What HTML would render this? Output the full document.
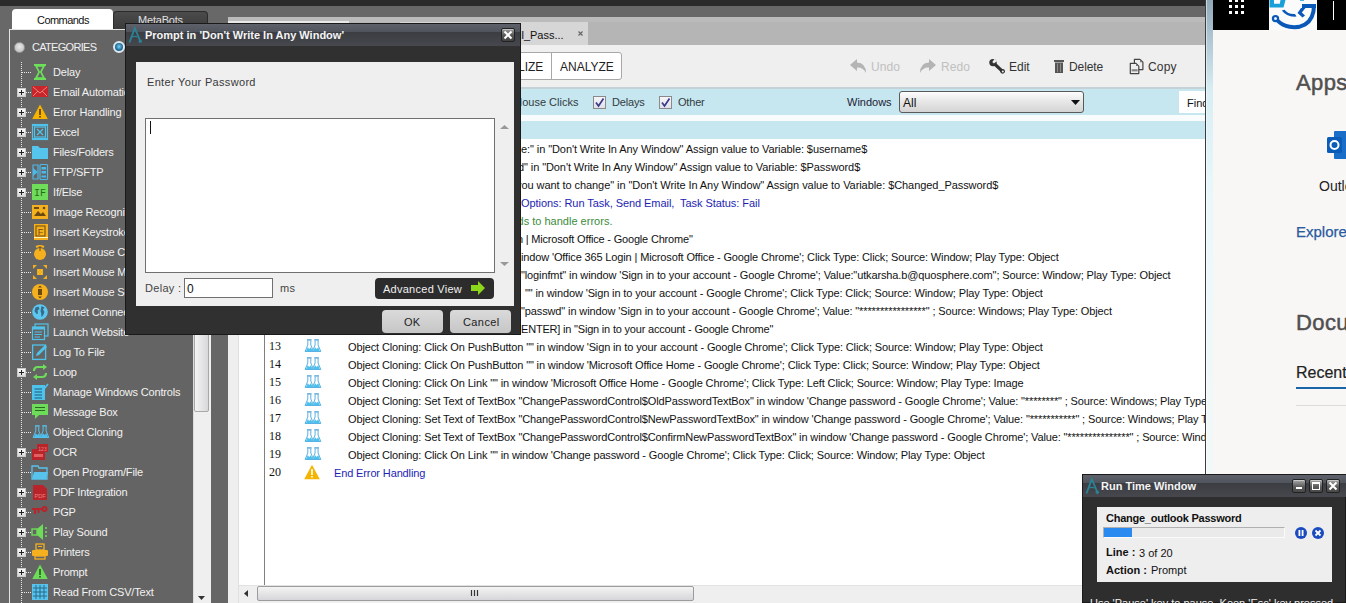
<!DOCTYPE html>
<html><head><meta charset="utf-8">
<style>
*{box-sizing:border-box}
html,body{margin:0;padding:0}
body{width:1346px;height:603px;overflow:hidden;position:relative;background:#686868;font-family:"Liberation Sans",sans-serif;font-size:11px}
.a{position:absolute}
.t{position:absolute;white-space:nowrap;line-height:1}
svg{position:absolute;overflow:visible}
.side{color:#f2f2f2;font-size:11px;letter-spacing:-0.18px}
.code{font-size:11px;letter-spacing:-0.13px;color:#111}
.ln{font-family:"Liberation Serif",serif;font-size:12px;color:#111}
</style></head><body>

<div class="a" style="left:0px;top:0px;width:1346px;height:6px;background:#2b2b2b"></div>
<div class="a" style="left:12px;top:9px;width:101px;height:21px;background:#fff;border-radius:4px 4px 0 0"></div>
<div class="t" style="left:37px;top:15px;font-size:11px;color:#111;letter-spacing:-0.55px">Commands</div>
<div class="a" style="left:113px;top:11px;width:95px;height:19px;background:linear-gradient(#4b4b4b,#3a3a3a);border-radius:4px 4px 0 0;border:1px solid #2c2c2c;border-bottom:none"></div>
<div class="t" style="left:138px;top:15px;font-size:11px;color:#e0e0e0;letter-spacing:-0.2px">MetaBots</div>
<div class="a" style="left:9px;top:29px;width:205px;height:580px;background:#646464;border-left:1px solid #e4e4e4;border-top:1px solid #e4e4e4"></div>
<div class="a" style="left:14px;top:42px;width:11px;height:11px;border-radius:50%;background:radial-gradient(circle at 50% 40%,#e8e8e8,#b8b8b8);border:1px solid #9a9a9a"></div>
<div class="t" style="left:32px;top:42px;font-size:11px;color:#f0f0f0;letter-spacing:-0.7px">CATEGORIES</div>
<div class="a" style="left:113px;top:41px;width:12px;height:12px;border-radius:50%;background:radial-gradient(circle at 50% 45%,#7fd0f0,#1a6a9a 60%);border:2px solid #dfe8ee"></div>
<div class="a" style="left:21px;top:62px;width:1px;height:541px;background:repeating-linear-gradient(#e8e8e8 0 1px,transparent 1px 2px)"></div>
<div class="a" style="left:22px;top:72px;width:9px;height:1px;background:repeating-linear-gradient(90deg,#e8e8e8 0 1px,transparent 1px 2px)"></div>
<svg style="left:32px;top:64px" width="16" height="16" viewBox="0 0 16 16"><rect x="2" y="0" width="12" height="2" fill="#6ee05a"/><rect x="2" y="14" width="12" height="2" fill="#6ee05a"/><path d="M4 2 L12 2 L8.8 8 L12 14 L4 14 L7.2 8 Z" fill="none" stroke="#6ee05a" stroke-width="1.6"/></svg>
<div class="t side" style="left:53px;top:67px;">Delay</div>
<div class="a" style="left:22px;top:92px;width:9px;height:1px;background:repeating-linear-gradient(90deg,#e8e8e8 0 1px,transparent 1px 2px)"></div>
<div class="a" style="left:17px;top:88px;width:9px;height:9px;background:linear-gradient(#fafafa,#d8d8d8);border:1px solid #c8c8c8"></div>
<div class="a" style="left:19px;top:92px;width:5px;height:1px;background:#222"></div>
<div class="a" style="left:21px;top:90px;width:1px;height:5px;background:#222"></div>
<svg style="left:32px;top:84px" width="16" height="16" viewBox="0 0 16 16"><rect x="0" y="2" width="16" height="11" fill="#c8262a"/><path d="M1 3 L8 9 L15 3" stroke="#f08080" stroke-width="1" fill="none"/><path d="M1 12 L6 7 M15 12 L10 7" stroke="#f08080" stroke-width="1"/></svg>
<div class="t side" style="left:53px;top:87px;">Email Automation</div>
<div class="a" style="left:22px;top:112px;width:9px;height:1px;background:repeating-linear-gradient(90deg,#e8e8e8 0 1px,transparent 1px 2px)"></div>
<div class="a" style="left:17px;top:108px;width:9px;height:9px;background:linear-gradient(#fafafa,#d8d8d8);border:1px solid #c8c8c8"></div>
<div class="a" style="left:19px;top:112px;width:5px;height:1px;background:#222"></div>
<div class="a" style="left:21px;top:110px;width:1px;height:5px;background:#222"></div>
<svg style="left:32px;top:104px" width="16" height="16" viewBox="0 0 16 16"><path d="M8 0.5 L15.8 15 L0.2 15 Z" fill="#f5b400"/><rect x="7.2" y="5" width="1.6" height="6" fill="#5a3a00"/><rect x="7.2" y="12" width="1.6" height="1.6" fill="#5a3a00"/></svg>
<div class="t side" style="left:53px;top:107px;">Error Handling</div>
<div class="a" style="left:22px;top:132px;width:9px;height:1px;background:repeating-linear-gradient(90deg,#e8e8e8 0 1px,transparent 1px 2px)"></div>
<div class="a" style="left:17px;top:128px;width:9px;height:9px;background:linear-gradient(#fafafa,#d8d8d8);border:1px solid #c8c8c8"></div>
<div class="a" style="left:19px;top:132px;width:5px;height:1px;background:#222"></div>
<div class="a" style="left:21px;top:130px;width:1px;height:5px;background:#222"></div>
<svg style="left:32px;top:124px" width="16" height="16" viewBox="0 0 16 16"><rect x="0.5" y="0.5" width="15" height="15" fill="none" stroke="#4fc3ec" stroke-width="1.2"/><rect x="2.5" y="3" width="11" height="10" fill="none" stroke="#4fc3ec" stroke-width="1.2"/><path d="M5 5 L11 11 M11 5 L5 11" stroke="#4fc3ec" stroke-width="1.4"/><rect x="0" y="0" width="16" height="2" fill="#4fc3ec"/><rect x="0" y="14" width="16" height="2" fill="#4fc3ec"/></svg>
<div class="t side" style="left:53px;top:127px;">Excel</div>
<div class="a" style="left:22px;top:152px;width:9px;height:1px;background:repeating-linear-gradient(90deg,#e8e8e8 0 1px,transparent 1px 2px)"></div>
<div class="a" style="left:17px;top:148px;width:9px;height:9px;background:linear-gradient(#fafafa,#d8d8d8);border:1px solid #c8c8c8"></div>
<div class="a" style="left:19px;top:152px;width:5px;height:1px;background:#222"></div>
<div class="a" style="left:21px;top:150px;width:1px;height:5px;background:#222"></div>
<svg style="left:32px;top:144px" width="16" height="16" viewBox="0 0 16 16"><path d="M0 2 L6 2 L8 4 L16 4 L16 15 L0 15 Z" fill="#55c5ee"/></svg>
<div class="t side" style="left:53px;top:147px;">Files/Folders</div>
<div class="a" style="left:22px;top:172px;width:9px;height:1px;background:repeating-linear-gradient(90deg,#e8e8e8 0 1px,transparent 1px 2px)"></div>
<div class="a" style="left:17px;top:168px;width:9px;height:9px;background:linear-gradient(#fafafa,#d8d8d8);border:1px solid #c8c8c8"></div>
<div class="a" style="left:19px;top:172px;width:5px;height:1px;background:#222"></div>
<div class="a" style="left:21px;top:170px;width:1px;height:5px;background:#222"></div>
<svg style="left:32px;top:164px" width="16" height="16" viewBox="0 0 16 16"><path d="M1 1 L6 1 L6 15 L1 15 Z" fill="none" stroke="#4fb8e6" stroke-width="1.2"/><path d="M1 4 L6 8 L1 12" fill="#4fb8e6"/><rect x="8" y="0.5" width="7.5" height="15" rx="1" fill="none" stroke="#4fb8e6" stroke-width="1.2"/><rect x="9.5" y="3" width="4.5" height="2.5" fill="#4fb8e6"/><rect x="9.5" y="7" width="4.5" height="2.5" fill="#4fb8e6"/><rect x="9.5" y="11.5" width="4.5" height="2" fill="#4fb8e6"/></svg>
<div class="t side" style="left:53px;top:167px;">FTP/SFTP</div>
<div class="a" style="left:22px;top:192px;width:9px;height:1px;background:repeating-linear-gradient(90deg,#e8e8e8 0 1px,transparent 1px 2px)"></div>
<div class="a" style="left:17px;top:188px;width:9px;height:9px;background:linear-gradient(#fafafa,#d8d8d8);border:1px solid #c8c8c8"></div>
<div class="a" style="left:19px;top:192px;width:5px;height:1px;background:#222"></div>
<div class="a" style="left:21px;top:190px;width:1px;height:5px;background:#222"></div>
<svg style="left:32px;top:184px" width="16" height="16" viewBox="0 0 16 16"><rect x="0" y="0" width="16" height="16" fill="#6fdc5a"/><text x="8" y="12.3" font-family="Liberation Mono" font-size="10" fill="#2a6a20" text-anchor="middle">IF</text></svg>
<div class="t side" style="left:53px;top:187px;">If/Else</div>
<div class="a" style="left:22px;top:212px;width:9px;height:1px;background:repeating-linear-gradient(90deg,#e8e8e8 0 1px,transparent 1px 2px)"></div>
<svg style="left:32px;top:204px" width="16" height="16" viewBox="0 0 16 16"><rect x="0" y="1" width="16" height="14" fill="#f5b020"/><path d="M2 12 L6 7 L9 10 L11 8 L14 12 Z" fill="#6a4a10"/><rect x="2" y="3" width="5" height="2" fill="#6a4a10"/><circle cx="12" cy="4" r="1.3" fill="#6a4a10"/></svg>
<div class="t side" style="left:53px;top:207px;">Image Recognition</div>
<div class="a" style="left:22px;top:232px;width:9px;height:1px;background:repeating-linear-gradient(90deg,#e8e8e8 0 1px,transparent 1px 2px)"></div>
<svg style="left:32px;top:224px" width="16" height="16" viewBox="0 0 16 16"><rect x="2" y="0" width="14" height="16" fill="#f5b020"/><rect x="4" y="2" width="9" height="10" fill="#f5b020" stroke="#6a4a10" stroke-width="1"/><text x="8.5" y="10.5" font-family="Liberation Sans" font-size="9" fill="#6a4a10" text-anchor="middle">F</text><rect x="2" y="13" width="14" height="1" fill="#fff5c0"/></svg>
<div class="t side" style="left:53px;top:227px;">Insert Keystrokes</div>
<div class="a" style="left:22px;top:252px;width:9px;height:1px;background:repeating-linear-gradient(90deg,#e8e8e8 0 1px,transparent 1px 2px)"></div>
<svg style="left:32px;top:244px" width="16" height="16" viewBox="0 0 16 16"><ellipse cx="8" cy="10" rx="6" ry="6" fill="#f5b020"/><path d="M4 3 Q8 1 12 3" stroke="#f5b020" stroke-width="2" fill="none"/><rect x="7.5" y="2" width="1" height="5" fill="#6a4a10"/></svg>
<div class="t side" style="left:53px;top:247px;">Insert Mouse Click</div>
<div class="a" style="left:22px;top:272px;width:9px;height:1px;background:repeating-linear-gradient(90deg,#e8e8e8 0 1px,transparent 1px 2px)"></div>
<svg style="left:32px;top:264px" width="16" height="16" viewBox="0 0 16 16"><rect x="5" y="5" width="6" height="6" fill="#f5b020"/><path d="M1 1 L5 1 L1 5 Z M15 1 L11 1 L15 5 Z M1 15 L5 15 L1 11 Z M15 15 L11 15 L15 11 Z" fill="#f5b020"/></svg>
<div class="t side" style="left:53px;top:267px;">Insert Mouse Move</div>
<div class="a" style="left:22px;top:292px;width:9px;height:1px;background:repeating-linear-gradient(90deg,#e8e8e8 0 1px,transparent 1px 2px)"></div>
<svg style="left:32px;top:284px" width="16" height="16" viewBox="0 0 16 16"><circle cx="8" cy="8" r="8" fill="#f5b020"/><rect x="6" y="5" width="4" height="6" fill="#6a4a10"/><path d="M6 3.5 L8 1.5 L10 3.5 Z M6 12.5 L8 14.5 L10 12.5 Z" fill="#6a4a10"/></svg>
<div class="t side" style="left:53px;top:287px;">Insert Mouse Scroll</div>
<div class="a" style="left:22px;top:312px;width:9px;height:1px;background:repeating-linear-gradient(90deg,#e8e8e8 0 1px,transparent 1px 2px)"></div>
<svg style="left:32px;top:304px" width="16" height="16" viewBox="0 0 16 16"><circle cx="8" cy="8" r="7.8" fill="#5cc8f0"/><path d="M3.5 3.5 L6.5 2.5 L7.5 5 L5.5 6.5 L6 9.5 L4.5 10 L2.5 7 Z M9.5 2 L12.5 3.5 L11 5.5 L12.5 8 L11 11.5 L9.5 13 L9.2 9.5 L8.5 7 Z" fill="#3a6a88"/></svg>
<div class="t side" style="left:53px;top:307px;">Internet Connection</div>
<div class="a" style="left:22px;top:332px;width:9px;height:1px;background:repeating-linear-gradient(90deg,#e8e8e8 0 1px,transparent 1px 2px)"></div>
<svg style="left:32px;top:324px" width="16" height="16" viewBox="0 0 16 16"><rect x="3" y="0" width="13" height="12" fill="none" stroke="#4fc3ec" stroke-width="1.2"/><rect x="0.5" y="3" width="12" height="12.5" fill="#646464" stroke="#4fc3ec" stroke-width="1.2"/><rect x="0" y="3" width="13" height="2.5" fill="#4fc3ec"/><path d="M2.5 8 H10 M2.5 10.5 H10 M2.5 13 H8" stroke="#4fc3ec" stroke-width="1.2"/></svg>
<div class="t side" style="left:53px;top:327px;">Launch Website</div>
<div class="a" style="left:22px;top:352px;width:9px;height:1px;background:repeating-linear-gradient(90deg,#e8e8e8 0 1px,transparent 1px 2px)"></div>
<svg style="left:32px;top:344px" width="16" height="16" viewBox="0 0 16 16"><rect x="0.6" y="1" width="13" height="14.4" fill="none" stroke="#4fc3ec" stroke-width="1.3"/><path d="M4 12 L5 9 L13 1 L15 3 L7 11 Z" fill="#4fc3ec"/></svg>
<div class="t side" style="left:53px;top:347px;">Log To File</div>
<div class="a" style="left:22px;top:372px;width:9px;height:1px;background:repeating-linear-gradient(90deg,#e8e8e8 0 1px,transparent 1px 2px)"></div>
<div class="a" style="left:17px;top:368px;width:9px;height:9px;background:linear-gradient(#fafafa,#d8d8d8);border:1px solid #c8c8c8"></div>
<div class="a" style="left:19px;top:372px;width:5px;height:1px;background:#222"></div>
<div class="a" style="left:21px;top:370px;width:1px;height:5px;background:#222"></div>
<svg style="left:32px;top:364px" width="16" height="16" viewBox="0 0 16 16"><path d="M2 7 Q2 3 6 3 L12 3" stroke="#6edc5a" stroke-width="2.2" fill="none"/><path d="M11 0 L15 3 L11 6 Z" fill="#6edc5a"/><path d="M14 9 Q14 13 10 13 L4 13" stroke="#6edc5a" stroke-width="2.2" fill="none"/><path d="M5 10 L1 13 L5 16 Z" fill="#6edc5a"/></svg>
<div class="t side" style="left:53px;top:367px;">Loop</div>
<div class="a" style="left:22px;top:392px;width:9px;height:1px;background:repeating-linear-gradient(90deg,#e8e8e8 0 1px,transparent 1px 2px)"></div>
<svg style="left:32px;top:384px" width="16" height="16" viewBox="0 0 16 16"><rect x="0" y="1" width="13" height="15" fill="#4fc3ec"/><path d="M2.5 5 H10 M2.5 8 H10 M2.5 11 H10 M2.5 14 H10" stroke="#1a5a7a" stroke-width="1"/><path d="M10 3 L12 5 L16 0" stroke="#4fc3ec" stroke-width="1.6" fill="none"/></svg>
<div class="t side" style="left:53px;top:387px;">Manage Windows Controls</div>
<div class="a" style="left:22px;top:412px;width:9px;height:1px;background:repeating-linear-gradient(90deg,#e8e8e8 0 1px,transparent 1px 2px)"></div>
<svg style="left:32px;top:404px" width="16" height="16" viewBox="0 0 16 16"><rect x="0" y="0" width="16" height="11" fill="#6edc5a"/><path d="M3 11 L3 15 L7 11 Z" fill="#6edc5a"/><path d="M3 3.5 H13 M3 6.5 H13" stroke="#2a6a20" stroke-width="1.2"/></svg>
<div class="t side" style="left:53px;top:407px;">Message Box</div>
<div class="a" style="left:22px;top:432px;width:9px;height:1px;background:repeating-linear-gradient(90deg,#e8e8e8 0 1px,transparent 1px 2px)"></div>
<svg style="left:32px;top:424px" width="16" height="16" viewBox="0 0 16 16"><path d="M3.8 2.5 V7 L1.0999999999999996 13.5 H9.5 L6.8 7 V2.5" fill="none" stroke="#58c4ee" stroke-width="1"/><rect x="3.0" y="1.2" width="4.6" height="1.4" fill="#58c4ee"/><path d="M1.9 13.2 L3.6999999999999997 9.3 L5.3 11 L6.9 9.3 L8.7 13.2 Z" fill="#4cc0ee"/><path d="M11.1 2.5 V7 L8.399999999999999 13.5 H16.8 L14.1 7 V2.5" fill="none" stroke="#58c4ee" stroke-width="1"/><rect x="10.3" y="1.2" width="4.6" height="1.4" fill="#58c4ee"/><path d="M9.2 13.2 L11.0 9.3 L12.6 11 L14.2 9.3 L16.0 13.2 Z" fill="#4cc0ee"/></svg>
<div class="t side" style="left:53px;top:427px;">Object Cloning</div>
<div class="a" style="left:22px;top:452px;width:9px;height:1px;background:repeating-linear-gradient(90deg,#e8e8e8 0 1px,transparent 1px 2px)"></div>
<div class="a" style="left:17px;top:448px;width:9px;height:9px;background:linear-gradient(#fafafa,#d8d8d8);border:1px solid #c8c8c8"></div>
<div class="a" style="left:19px;top:452px;width:5px;height:1px;background:#222"></div>
<div class="a" style="left:21px;top:450px;width:1px;height:5px;background:#222"></div>
<svg style="left:32px;top:444px" width="16" height="16" viewBox="0 0 16 16"><rect x="0" y="5" width="13" height="11" fill="#b8242a"/><rect x="5" y="0" width="11" height="8" fill="#b8242a"/><text x="10.5" y="6.5" font-size="5" fill="#f08080" text-anchor="middle" font-family="Liberation Sans">123</text><rect x="2" y="10" width="9" height="3" fill="#e06060"/></svg>
<div class="t side" style="left:53px;top:447px;">OCR</div>
<div class="a" style="left:22px;top:472px;width:9px;height:1px;background:repeating-linear-gradient(90deg,#e8e8e8 0 1px,transparent 1px 2px)"></div>
<svg style="left:32px;top:464px" width="16" height="16" viewBox="0 0 16 16"><path d="M0 2 L6 2 L7 4 L15 4 L15 15 L0 15 Z" fill="none" stroke="#58c4ee" stroke-width="1.3"/><path d="M2 8 L16 8 L14 15 L0 15 Z" fill="#58c4ee"/></svg>
<div class="t side" style="left:53px;top:467px;">Open Program/File</div>
<div class="a" style="left:22px;top:492px;width:9px;height:1px;background:repeating-linear-gradient(90deg,#e8e8e8 0 1px,transparent 1px 2px)"></div>
<div class="a" style="left:17px;top:488px;width:9px;height:9px;background:linear-gradient(#fafafa,#d8d8d8);border:1px solid #c8c8c8"></div>
<div class="a" style="left:19px;top:492px;width:5px;height:1px;background:#222"></div>
<div class="a" style="left:21px;top:490px;width:1px;height:5px;background:#222"></div>
<svg style="left:32px;top:484px" width="16" height="16" viewBox="0 0 16 16"><path d="M1 1 L11 1 L15 5 L15 16 L1 16 Z" fill="#b8242a"/><text x="8" y="14" font-size="5.5" fill="#f08080" text-anchor="middle" font-family="Liberation Sans">PDF</text></svg>
<div class="t side" style="left:53px;top:487px;">PDF Integration</div>
<div class="a" style="left:22px;top:512px;width:9px;height:1px;background:repeating-linear-gradient(90deg,#e8e8e8 0 1px,transparent 1px 2px)"></div>
<div class="a" style="left:17px;top:508px;width:9px;height:9px;background:linear-gradient(#fafafa,#d8d8d8);border:1px solid #c8c8c8"></div>
<div class="a" style="left:19px;top:512px;width:5px;height:1px;background:#222"></div>
<div class="a" style="left:21px;top:510px;width:1px;height:5px;background:#222"></div>
<svg style="left:32px;top:504px" width="16" height="16" viewBox="0 0 16 16"><circle cx="12.5" cy="5" r="3" fill="#b8242a"/><circle cx="12.5" cy="5" r="1" fill="#646464"/><rect x="0" y="4" width="11" height="2" fill="#b8242a"/><rect x="2" y="6" width="2" height="4" fill="#b8242a"/><rect x="5.5" y="6" width="2" height="3" fill="#b8242a"/></svg>
<div class="t side" style="left:53px;top:507px;">PGP</div>
<div class="a" style="left:22px;top:532px;width:9px;height:1px;background:repeating-linear-gradient(90deg,#e8e8e8 0 1px,transparent 1px 2px)"></div>
<div class="a" style="left:17px;top:528px;width:9px;height:9px;background:linear-gradient(#fafafa,#d8d8d8);border:1px solid #c8c8c8"></div>
<div class="a" style="left:19px;top:532px;width:5px;height:1px;background:#222"></div>
<div class="a" style="left:21px;top:530px;width:1px;height:5px;background:#222"></div>
<svg style="left:32px;top:524px" width="16" height="16" viewBox="0 0 16 16"><rect x="0" y="5" width="5" height="6" fill="none" stroke="#6edc5a" stroke-width="1.4"/><path d="M5 5 L11 0 L11 16 L5 11 Z" fill="#6edc5a"/><path d="M13 4 H15 M13 8 H15 M13 12 H15" stroke="#6edc5a" stroke-width="1.3"/></svg>
<div class="t side" style="left:53px;top:527px;">Play Sound</div>
<div class="a" style="left:22px;top:552px;width:9px;height:1px;background:repeating-linear-gradient(90deg,#e8e8e8 0 1px,transparent 1px 2px)"></div>
<div class="a" style="left:17px;top:548px;width:9px;height:9px;background:linear-gradient(#fafafa,#d8d8d8);border:1px solid #c8c8c8"></div>
<div class="a" style="left:19px;top:552px;width:5px;height:1px;background:#222"></div>
<div class="a" style="left:21px;top:550px;width:1px;height:5px;background:#222"></div>
<svg style="left:32px;top:544px" width="16" height="16" viewBox="0 0 16 16"><rect x="4" y="0" width="8" height="6" fill="none" stroke="#f5b020" stroke-width="1.3"/><path d="M6 2.5 H10" stroke="#f5b020" stroke-width="1"/><rect x="0" y="6" width="16" height="6" rx="1" fill="#f5b020"/><rect x="3" y="12" width="10" height="3" fill="none" stroke="#f5b020" stroke-width="1.3"/></svg>
<div class="t side" style="left:53px;top:547px;">Printers</div>
<div class="a" style="left:22px;top:572px;width:9px;height:1px;background:repeating-linear-gradient(90deg,#e8e8e8 0 1px,transparent 1px 2px)"></div>
<div class="a" style="left:17px;top:568px;width:9px;height:9px;background:linear-gradient(#fafafa,#d8d8d8);border:1px solid #c8c8c8"></div>
<div class="a" style="left:19px;top:572px;width:5px;height:1px;background:#222"></div>
<div class="a" style="left:21px;top:570px;width:1px;height:5px;background:#222"></div>
<svg style="left:32px;top:564px" width="16" height="16" viewBox="0 0 16 16"><path d="M8 0.5 L15.8 15 L0.2 15 Z" fill="#6edc5a"/><rect x="7.2" y="5" width="1.6" height="6" fill="#2a5a20"/><rect x="7.2" y="12" width="1.6" height="1.6" fill="#2a5a20"/></svg>
<div class="t side" style="left:53px;top:567px;">Prompt</div>
<div class="a" style="left:22px;top:592px;width:9px;height:1px;background:repeating-linear-gradient(90deg,#e8e8e8 0 1px,transparent 1px 2px)"></div>
<svg style="left:32px;top:584px" width="16" height="16" viewBox="0 0 16 16"><rect x="0" y="0" width="16" height="16" fill="#58c4ee"/><path d="M4 0 V16 M8 0 V16 M12 0 V16 M0 4 H16 M0 8 H16 M0 12 H16" stroke="#2a6a88" stroke-width="1"/><rect x="0.5" y="0.5" width="15" height="15" fill="none" stroke="#58c4ee"/></svg>
<div class="t side" style="left:53px;top:587px;">Read From CSV/Text</div>
<div class="a" style="left:193px;top:29px;width:18px;height:574px;background:#efefef;border-left:1px solid #dcdcdc"></div>
<div class="a" style="left:194px;top:29px;width:15px;height:383px;background:linear-gradient(90deg,#f4f4f4,#d8d8dc);border:1px solid #a8a8a8;border-radius:2px"></div>
<svg style="left:198px;top:596px" width="8" height="5"><path d="M0 0 L7 0 L3.5 4 Z" fill="#333"/></svg>
<div class="a" style="left:211px;top:29px;width:17px;height:574px;background:#666"></div>
<div class="a" style="left:228px;top:17px;width:977px;height:28px;background:#b5b5b5"></div>
<div class="a" style="left:228px;top:17px;width:977px;height:5px;background:#bbbbbb"></div>
<div class="a" style="left:228px;top:21px;width:121px;height:2px;background:#e8e8e8"></div>
<div class="a" style="left:400px;top:22px;width:188px;height:23px;background:#d6d6d6"></div>
<div class="t" style="left:519px;top:30px;font-size:11px;color:#111">il_Pass...</div>
<svg style="left:578px;top:31px" width="5" height="5"><path d="M0.5 0.5 L4.5 4.5 M4.5 0.5 L0.5 4.5" stroke="#666" stroke-width="1.2"/></svg>
<div class="a" style="left:228px;top:45px;width:977px;height:42px;background:#efefef"></div>
<div class="a" style="left:440px;top:52px;width:182px;height:28px;background:#fff;border:1px solid #a8a8a8;border-radius:3px"></div>
<div class="a" style="left:551px;top:52px;width:1px;height:28px;background:#a8a8a8"></div>
<div class="t" style="left:482px;top:61px;font-size:12px;color:#222">VISUALIZE</div>
<div class="t" style="left:560px;top:61px;font-size:12px;color:#222">ANALYZE</div>
<svg style="left:850px;top:59px" width="17" height="14" viewBox="0 0 17 14"><path d="M7 0 L0 6 L7 12 L7 8.5 Q13 8 16 14 Q16 4 7 3.5 Z" fill="#b4b4b4"/></svg>
<div class="t" style="left:871px;top:61px;font-size:12px;color:#c0c0c0;letter-spacing:0.1px">Undo</div>
<svg style="left:919px;top:59px" width="17" height="14" viewBox="0 0 17 14"><path d="M10 0 L17 6 L10 12 L10 8.5 Q4 8 1 14 Q1 4 10 3.5 Z" fill="#b4b4b4"/></svg>
<div class="t" style="left:941px;top:61px;font-size:12px;color:#c0c0c0;letter-spacing:0.1px">Redo</div>
<svg style="left:989px;top:59px" width="17" height="16" viewBox="0 0 17 16"><path d="M4 3.5 L13.5 12.3" stroke="#333" stroke-width="3.2" stroke-linecap="round"/><circle cx="4" cy="3.6" r="3.7" fill="#333"/><path d="M3.3 3 L5.6 -0.2 L8 2.2 L4.8 4.6 Z" fill="#efefef"/><circle cx="13.6" cy="12.3" r="2.4" fill="#333"/><circle cx="13.8" cy="12.5" r="1" fill="#efefef"/></svg>
<div class="t" style="left:1009px;top:61px;font-size:12px;color:#333">Edit</div>
<svg style="left:1054px;top:60px" width="10" height="13" viewBox="0 0 10 13"><rect x="0" y="0" width="10" height="2" fill="#555"/><rect x="1" y="2.5" width="8" height="10.5" fill="#555"/><path d="M3.5 3.5 V12 M6.5 3.5 V12" stroke="#999" stroke-width="0.8"/></svg>
<div class="t" style="left:1069px;top:61px;font-size:12px;color:#333;letter-spacing:-0.1px">Delete</div>
<svg style="left:1129px;top:58px" width="16" height="17" viewBox="0 0 16 17"><path d="M5.4 1.3 H11 L13.9 4.2 V11.6 H5.4 Z" fill="#efefef" stroke="#444" stroke-width="1.2" stroke-linejoin="round"/><path d="M11 1.3 V4.2 H13.9" fill="#777"/><path d="M1.3 5.3 H7 L9.8 8.1 V15.6 H1.3 Z" fill="#efefef" stroke="#444" stroke-width="1.2" stroke-linejoin="round"/><path d="M7 5.3 V8.1 H9.8" fill="#777"/><rect x="2.6" y="11.2" width="6" height="2.2" fill="#888"/></svg>
<div class="t" style="left:1148px;top:61px;font-size:12px;color:#333;letter-spacing:0.2px">Copy</div>
<div class="a" style="left:228px;top:87px;width:977px;height:28px;background:#c6e6f0;border-top:2px solid #c4d2d8"></div>
<div class="t" style="left:513px;top:97px;font-size:11px;color:#333b40">Mouse Clicks</div>
<div class="a" style="left:593px;top:96px;width:13px;height:13px;background:linear-gradient(#f6f6fa,#e0e0ea);border:1px solid #8a8a8a"></div>
<svg style="left:595px;top:98px" width="9" height="9" viewBox="0 0 9 9"><path d="M1 4.5 L3.5 8 L8.5 0.5" fill="none" stroke="#3a3a8a" stroke-width="1.7"/></svg>
<div class="t" style="left:612px;top:97px;font-size:11px;color:#333b40;letter-spacing:-0.15px">Delays</div>
<div class="a" style="left:659px;top:96px;width:13px;height:13px;background:linear-gradient(#f6f6fa,#e0e0ea);border:1px solid #8a8a8a"></div>
<svg style="left:661px;top:98px" width="9" height="9" viewBox="0 0 9 9"><path d="M1 4.5 L3.5 8 L8.5 0.5" fill="none" stroke="#3a3a8a" stroke-width="1.7"/></svg>
<div class="t" style="left:678px;top:97px;font-size:11px;color:#333b40;letter-spacing:-0.2px">Other</div>
<div class="t" style="left:847px;top:97px;font-size:11px;color:#223">Windows</div>
<div class="a" style="left:899px;top:91px;width:185px;height:22px;background:linear-gradient(#fdfdfd,#e8e8e8 45%,#d4d4d4);border:1px solid #5a5a5a;border-radius:3px"></div>
<div class="t" style="left:903px;top:97px;font-size:12px;color:#111">All</div>
<svg style="left:1071px;top:100px" width="10" height="6"><path d="M0 0 L9 0 L4.5 5 Z" fill="#111"/></svg>
<div class="a" style="left:1179px;top:91px;width:26px;height:22px;background:#fff"></div>
<div class="t" style="left:1187px;top:98px;font-size:11px;color:#111">Find</div>
<div class="a" style="left:228px;top:115px;width:977px;height:6px;background:#f8fcfd"></div>
<div class="a" style="left:228px;top:121px;width:977px;height:482px;background:#fff"></div>
<div class="a" style="left:228px;top:121px;width:11px;height:482px;background:#efefef;border-right:1px solid #e0e0e0"></div>
<div class="a" style="left:264px;top:121px;width:1px;height:464px;background:#808080"></div>
<div class="a" style="left:265px;top:121px;width:940px;height:18px;background:#c6e6f0"></div>
<div class="t code" style="left:521px;top:144px;color:#111;letter-spacing:-0.084px">e:&quot; in &quot;Don't Write In Any Window&quot; Assign value to Variable: $username$</div>
<div class="t code" style="left:518px;top:162px;color:#111;letter-spacing:-0.090px">d&quot; in &quot;Don't Write In Any Window&quot; Assign value to Variable: $Password$</div>
<div class="t code" style="left:516px;top:180px;color:#111;letter-spacing:-0.066px">you want to change&quot; in &quot;Don't Write In Any Window&quot; Assign value to Variable: $Changed_Password$</div>
<div class="t code" style="left:521px;top:198px;color:#1e1eb4;letter-spacing:-0.060px">Options: Run Task, Send Email,&nbsp; Task Status: Fail</div>
<div class="t code" style="left:517.5px;top:216px;color:#3c8c3c;letter-spacing:0.010px">ds to handle errors.</div>
<div class="t code" style="left:517px;top:234px;color:#111;letter-spacing:-0.190px">n | Microsoft Office - Google Chrome&quot;</div>
<div class="t code" style="left:521px;top:252px;color:#111;letter-spacing:-0.140px">indow 'Office 365 Login | Microsoft Office - Google Chrome'; Click Type: Click; Source: Window; Play Type: Object</div>
<div class="t code" style="left:521px;top:270px;color:#111;letter-spacing:-0.120px">&quot;loginfmt&quot; in window 'Sign in to your account - Google Chrome'; Value:&quot;utkarsha.b@quosphere.com&quot;; Source: Window; Play Type: Object</div>
<div class="t code" style="left:525px;top:288px;color:#111;letter-spacing:-0.120px">&quot;&quot; in window 'Sign in to your account - Google Chrome'; Click Type: Click; Source: Window; Play Type: Object</div>
<div class="t code" style="left:521px;top:306px;color:#111;letter-spacing:-0.120px">&quot;passwd&quot; in window 'Sign in to your account - Google Chrome'; Value: &quot;****************&quot; ; Source: Windows; Play Type: Object</div>
<div class="t code" style="left:521px;top:324px;color:#111;letter-spacing:-0.195px">ENTER] in &quot;Sign in to your account - Google Chrome&quot;</div>
<div class="a" style="left:265px;top:121px;width:940px;height:464px;overflow:hidden">
<div class="t ln" style="left:4px;top:219px">13</div>
<svg style="left:39px;top:217px" width="16" height="16" viewBox="0 0 16 16"><path d="M3.8 2.5 V7 L1.0999999999999996 13.5 H9.5 L6.8 7 V2.5" fill="none" stroke="#5ab0e0" stroke-width="1"/><rect x="3.0" y="1.2" width="4.6" height="1.4" fill="#5aa8d8"/><path d="M1.9 13.2 L3.6999999999999997 9.3 L5.3 11 L6.9 9.3 L8.7 13.2 Z" fill="#4cc0ee"/><path d="M11.1 2.5 V7 L8.399999999999999 13.5 H16.8 L14.1 7 V2.5" fill="none" stroke="#5ab0e0" stroke-width="1"/><rect x="10.3" y="1.2" width="4.6" height="1.4" fill="#5aa8d8"/><path d="M9.2 13.2 L11.0 9.3 L12.6 11 L14.2 9.3 L16.0 13.2 Z" fill="#4cc0ee"/></svg>
<div class="t code" style="left:83px;top:221px">Object Cloning: Click On PushButton &quot;&quot; in window 'Sign in to your account - Google Chrome'; Click Type: Click; Source: Window; Play Type: Object</div>
<div class="t ln" style="left:4px;top:237px">14</div>
<svg style="left:39px;top:235px" width="16" height="16" viewBox="0 0 16 16"><path d="M3.8 2.5 V7 L1.0999999999999996 13.5 H9.5 L6.8 7 V2.5" fill="none" stroke="#5ab0e0" stroke-width="1"/><rect x="3.0" y="1.2" width="4.6" height="1.4" fill="#5aa8d8"/><path d="M1.9 13.2 L3.6999999999999997 9.3 L5.3 11 L6.9 9.3 L8.7 13.2 Z" fill="#4cc0ee"/><path d="M11.1 2.5 V7 L8.399999999999999 13.5 H16.8 L14.1 7 V2.5" fill="none" stroke="#5ab0e0" stroke-width="1"/><rect x="10.3" y="1.2" width="4.6" height="1.4" fill="#5aa8d8"/><path d="M9.2 13.2 L11.0 9.3 L12.6 11 L14.2 9.3 L16.0 13.2 Z" fill="#4cc0ee"/></svg>
<div class="t code" style="left:83px;top:239px">Object Cloning: Click On PushButton &quot;&quot; in window 'Microsoft Office Home - Google Chrome'; Click Type: Click; Source: Window; Play Type: Object</div>
<div class="t ln" style="left:4px;top:255px">15</div>
<svg style="left:39px;top:253px" width="16" height="16" viewBox="0 0 16 16"><path d="M3.8 2.5 V7 L1.0999999999999996 13.5 H9.5 L6.8 7 V2.5" fill="none" stroke="#5ab0e0" stroke-width="1"/><rect x="3.0" y="1.2" width="4.6" height="1.4" fill="#5aa8d8"/><path d="M1.9 13.2 L3.6999999999999997 9.3 L5.3 11 L6.9 9.3 L8.7 13.2 Z" fill="#4cc0ee"/><path d="M11.1 2.5 V7 L8.399999999999999 13.5 H16.8 L14.1 7 V2.5" fill="none" stroke="#5ab0e0" stroke-width="1"/><rect x="10.3" y="1.2" width="4.6" height="1.4" fill="#5aa8d8"/><path d="M9.2 13.2 L11.0 9.3 L12.6 11 L14.2 9.3 L16.0 13.2 Z" fill="#4cc0ee"/></svg>
<div class="t code" style="left:83px;top:257px">Object Cloning: Click On Link &quot;&quot; in window 'Microsoft Office Home - Google Chrome'; Click Type: Left Click; Source: Window; Play Type: Image</div>
<div class="t ln" style="left:4px;top:273px">16</div>
<svg style="left:39px;top:271px" width="16" height="16" viewBox="0 0 16 16"><path d="M3.8 2.5 V7 L1.0999999999999996 13.5 H9.5 L6.8 7 V2.5" fill="none" stroke="#5ab0e0" stroke-width="1"/><rect x="3.0" y="1.2" width="4.6" height="1.4" fill="#5aa8d8"/><path d="M1.9 13.2 L3.6999999999999997 9.3 L5.3 11 L6.9 9.3 L8.7 13.2 Z" fill="#4cc0ee"/><path d="M11.1 2.5 V7 L8.399999999999999 13.5 H16.8 L14.1 7 V2.5" fill="none" stroke="#5ab0e0" stroke-width="1"/><rect x="10.3" y="1.2" width="4.6" height="1.4" fill="#5aa8d8"/><path d="M9.2 13.2 L11.0 9.3 L12.6 11 L14.2 9.3 L16.0 13.2 Z" fill="#4cc0ee"/></svg>
<div class="t code" style="left:83px;top:275px">Object Cloning: Set Text of TextBox &quot;ChangePasswordControl$OldPasswordTextBox&quot; in window 'Change password - Google Chrome'; Value: &quot;********&quot; ; Source: Windows; Play Type: Object</div>
<div class="t ln" style="left:4px;top:291px">17</div>
<svg style="left:39px;top:289px" width="16" height="16" viewBox="0 0 16 16"><path d="M3.8 2.5 V7 L1.0999999999999996 13.5 H9.5 L6.8 7 V2.5" fill="none" stroke="#5ab0e0" stroke-width="1"/><rect x="3.0" y="1.2" width="4.6" height="1.4" fill="#5aa8d8"/><path d="M1.9 13.2 L3.6999999999999997 9.3 L5.3 11 L6.9 9.3 L8.7 13.2 Z" fill="#4cc0ee"/><path d="M11.1 2.5 V7 L8.399999999999999 13.5 H16.8 L14.1 7 V2.5" fill="none" stroke="#5ab0e0" stroke-width="1"/><rect x="10.3" y="1.2" width="4.6" height="1.4" fill="#5aa8d8"/><path d="M9.2 13.2 L11.0 9.3 L12.6 11 L14.2 9.3 L16.0 13.2 Z" fill="#4cc0ee"/></svg>
<div class="t code" style="left:83px;top:293px">Object Cloning: Set Text of TextBox &quot;ChangePasswordControl$NewPasswordTextBox&quot; in window 'Change password - Google Chrome'; Value: &quot;***********&quot; ; Source: Windows; Play Type: Object</div>
<div class="t ln" style="left:4px;top:309px">18</div>
<svg style="left:39px;top:307px" width="16" height="16" viewBox="0 0 16 16"><path d="M3.8 2.5 V7 L1.0999999999999996 13.5 H9.5 L6.8 7 V2.5" fill="none" stroke="#5ab0e0" stroke-width="1"/><rect x="3.0" y="1.2" width="4.6" height="1.4" fill="#5aa8d8"/><path d="M1.9 13.2 L3.6999999999999997 9.3 L5.3 11 L6.9 9.3 L8.7 13.2 Z" fill="#4cc0ee"/><path d="M11.1 2.5 V7 L8.399999999999999 13.5 H16.8 L14.1 7 V2.5" fill="none" stroke="#5ab0e0" stroke-width="1"/><rect x="10.3" y="1.2" width="4.6" height="1.4" fill="#5aa8d8"/><path d="M9.2 13.2 L11.0 9.3 L12.6 11 L14.2 9.3 L16.0 13.2 Z" fill="#4cc0ee"/></svg>
<div class="t code" style="left:83px;top:311px">Object Cloning: Set Text of TextBox &quot;ChangePasswordControl$ConfirmNewPasswordTextBox&quot; in window 'Change password - Google Chrome'; Value: &quot;***************&quot; ; Source: Windows; Play Type: Object</div>
<div class="t ln" style="left:4px;top:327px">19</div>
<svg style="left:39px;top:325px" width="16" height="16" viewBox="0 0 16 16"><path d="M3.8 2.5 V7 L1.0999999999999996 13.5 H9.5 L6.8 7 V2.5" fill="none" stroke="#5ab0e0" stroke-width="1"/><rect x="3.0" y="1.2" width="4.6" height="1.4" fill="#5aa8d8"/><path d="M1.9 13.2 L3.6999999999999997 9.3 L5.3 11 L6.9 9.3 L8.7 13.2 Z" fill="#4cc0ee"/><path d="M11.1 2.5 V7 L8.399999999999999 13.5 H16.8 L14.1 7 V2.5" fill="none" stroke="#5ab0e0" stroke-width="1"/><rect x="10.3" y="1.2" width="4.6" height="1.4" fill="#5aa8d8"/><path d="M9.2 13.2 L11.0 9.3 L12.6 11 L14.2 9.3 L16.0 13.2 Z" fill="#4cc0ee"/></svg>
<div class="t code" style="left:83px;top:329px">Object Cloning: Click On Link &quot;&quot; in window 'Change password - Google Chrome'; Click Type: Click; Source: Window; Play Type: Object</div>
<div class="t ln" style="left:4px;top:345px">20</div>
<svg style="left:39px;top:343px" width="16" height="16" viewBox="0 0 16 16"><path d="M8 0.8 L15.8 15.2 L0.2 15.2 Z" fill="#f5b400"/><rect x="7.2" y="5" width="1.6" height="6" fill="#fff"/><rect x="7.2" y="12" width="1.6" height="1.6" fill="#fff"/></svg>
<div class="t code" style="left:69px;top:347px;color:#1e1eb4">End Error Handling</div>
</div>
<div class="a" style="left:239px;top:585px;width:966px;height:18px;background:#efefef;border-top:1px solid #e2e2e2"></div>
<svg style="left:244px;top:590px" width="5" height="8"><path d="M4 0 L4 7 L0 3.5 Z" fill="#333"/></svg>
<div class="a" style="left:257px;top:586px;width:437px;height:15px;background:linear-gradient(#f4f4f4,#d6d6da);border:1px solid #9c9c9c;border-radius:2px"></div>
<svg style="left:470px;top:590px" width="10" height="7"><path d="M1.5 0 V6 M4.5 0 V6 M7.5 0 V6" stroke="#333" stroke-width="1.2"/></svg>
<div class="a" style="left:1205px;top:0px;width:141px;height:603px;background:#f8f7f6"></div>
<div class="a" style="left:1205px;top:0px;width:1px;height:603px;background:#3c3c3c"></div>
<div class="a" style="left:1206px;top:0px;width:7px;height:603px;background:linear-gradient(#90a8b8 0,#b0c8d4 40px,#d8eef4 90px,#eaf8fb 200px,#f2f8f8 450px,#f4f4f4 603px)"></div>
<div class="a" style="left:1206px;top:0px;width:1px;height:603px;background:rgba(255,255,255,0.5)"></div>
<div class="a" style="left:1213px;top:0px;width:133px;height:30px;background:#000"></div>
<div class="a" style="left:1229px;top:-1px;width:3px;height:3px;background:#fff"></div>
<div class="a" style="left:1235px;top:-1px;width:3px;height:3px;background:#fff"></div>
<div class="a" style="left:1241px;top:-1px;width:3px;height:3px;background:#fff"></div>
<div class="a" style="left:1229px;top:5px;width:3px;height:3px;background:#fff"></div>
<div class="a" style="left:1235px;top:5px;width:3px;height:3px;background:#fff"></div>
<div class="a" style="left:1241px;top:5px;width:3px;height:3px;background:#fff"></div>
<div class="a" style="left:1229px;top:11px;width:3px;height:3px;background:#fff"></div>
<div class="a" style="left:1235px;top:11px;width:3px;height:3px;background:#fff"></div>
<div class="a" style="left:1241px;top:11px;width:3px;height:3px;background:#fff"></div>
<div class="a" style="left:1269px;top:0px;width:48px;height:30px;background:#fbfbfb"></div>
<svg style="left:1266px;top:0px" width="54" height="30" viewBox="0 0 54 30"><path fill-rule="evenodd" d="M3.5 0 L19.5 0 L17.5 7.4 L3.5 7.4 Z M8 0 L14.5 0 L13.8 3.8 L8 3.8 Z" fill="#1aa0d8"/><rect x="34" y="0" width="4" height="0.8" fill="#1aa0d8"/><path d="M11.5 20.5 C 17 26.5, 29 30, 39 24.5 C 45.5 20.5, 48 13, 48 5" stroke="#0a58b8" stroke-width="4" fill="none"/><rect x="36" y="4" width="14" height="4" fill="#0a58b8"/><path d="M35 8 L39.5 8 L35.8 12.5 L39 15.5 L36.5 17.5 L31.5 13 Z" fill="#0a58b8"/><path d="M15.8 10.6 Q 21 17.5 30.5 16.5 L 29 14 Q 22 14.5 18.5 9.8 Z" fill="#0a58b8"/><circle cx="9.5" cy="18.6" r="2.6" fill="#e8f4ff" stroke="#0a58b8" stroke-width="2.2"/></svg>
<div class="a" style="left:1333px;top:1px;width:1px;height:19px;background:#fff"></div>
<div class="t" style="left:1296px;top:72px;font-size:22px;color:#505050;-webkit-text-stroke:0.5px #505050;letter-spacing:0.4px">Apps</div>
<svg style="left:1327px;top:131px" width="22" height="28" viewBox="0 0 22 28"><rect x="7" y="0" width="15" height="28" rx="1" fill="#1a6ec8"/><rect x="0" y="6" width="15" height="16" rx="1.5" fill="#0a5cb8"/><circle cx="7.5" cy="14" r="4" fill="none" stroke="#fff" stroke-width="2"/></svg>
<div class="t" style="left:1319px;top:179px;font-size:14px;color:#222">Outlook</div>
<div class="t" style="left:1296px;top:224px;font-size:15px;color:#2a5aa0;-webkit-text-stroke:0.25px #2a5aa0">Explore</div>
<div class="t" style="left:1296px;top:312px;font-size:22px;color:#505050;-webkit-text-stroke:0.5px #505050;letter-spacing:0.4px">Documents</div>
<div class="t" style="left:1296px;top:365px;font-size:16px;color:#222;-webkit-text-stroke:0.2px #222">Recent</div>
<div class="a" style="left:1296px;top:387px;width:50px;height:2px;background:#1a64a8"></div>
<div class="a" style="left:1296px;top:405px;width:50px;height:1px;background:#dcdcdc"></div>
<div class="a" style="left:125px;top:23px;width:396px;height:312px;background:#303030;border:1px solid #1a1a1a"></div>
<div class="a" style="left:126px;top:24px;width:394px;height:22px;background:linear-gradient(#5e6169 0,#50545d 35%,#3b3d43 37%,#46484e 100%)"></div>
<svg style="left:128px;top:26px" width="15" height="18" viewBox="0 0 15 18"><path d="M1.5 16.5 L6.8 2 L12 14.5" fill="none" stroke="#2a8294" stroke-width="1.9"/><path d="M3.2 11.5 Q6 9.5 9.5 11" fill="none" stroke="#2a8294" stroke-width="1.3"/><circle cx="12.3" cy="15.3" r="1.7" fill="#2a8294"/></svg>
<div class="t" style="left:145px;top:30px;font-size:11px;font-weight:bold;color:#f4f4f4">Prompt in 'Don't Write In Any Window'</div>
<div class="a" style="left:501px;top:28px;width:14px;height:14px;background:linear-gradient(#a0a0a0,#5a5a5a 50%,#404040);border:1px solid #222;border-radius:2px;box-shadow:inset 0 1px 0 #c0c0c0"></div>
<svg style="left:504px;top:31px" width="8" height="8"><path d="M0.5 0.5 L7.5 7.5 M7.5 0.5 L0.5 7.5" stroke="#fff" stroke-width="2"/></svg>
<div class="a" style="left:136px;top:62px;width:378px;height:244px;background:#efefef"></div>
<div class="t" style="left:147px;top:77px;font-size:11px;color:#3a3a3a;letter-spacing:0.32px">Enter Your Password</div>
<div class="a" style="left:145px;top:118px;width:350px;height:155px;background:#fff;border:1px solid #707070"></div>
<div class="a" style="left:150px;top:121px;width:1px;height:13px;background:#111"></div>
<svg style="left:500px;top:125px" width="9" height="5"><path d="M0 4 L4.5 0 L9 4 Z" fill="#999"/></svg>
<svg style="left:500px;top:262px" width="9" height="5"><path d="M0 0 L4.5 4 L9 0 Z" fill="#999"/></svg>
<div class="t" style="left:145px;top:283px;font-size:11px;color:#444;letter-spacing:0.3px">Delay :</div>
<div class="a" style="left:184px;top:278px;width:89px;height:20px;background:#fff;border:1px solid #707070"></div>
<div class="t" style="left:187px;top:283px;font-size:12px;color:#111">0</div>
<div class="t" style="left:280px;top:283px;font-size:11px;color:#444;letter-spacing:0.3px">ms</div>
<div class="a" style="left:375px;top:278px;width:119px;height:21px;background:#2c2c2c;border-radius:4px"></div>
<div class="t" style="left:383px;top:284px;font-size:11px;color:#f0f0f0;letter-spacing:0.26px">Advanced View</div>
<svg style="left:471px;top:281px" width="15" height="14" viewBox="0 0 15 14"><path d="M0 4 L7 4 L7 0 L14 7 L7 14 L7 10 L0 10 Z" fill="#8cd61c"/></svg>
<div class="a" style="left:382px;top:310px;width:61px;height:23px;background:linear-gradient(#dadada,#c6c6c6);border-radius:4px"></div>
<div class="t" style="left:404px;top:317px;font-size:11px;color:#222;letter-spacing:0.1px">OK</div>
<div class="a" style="left:450px;top:310px;width:61px;height:23px;background:linear-gradient(#dadada,#c6c6c6);border-radius:4px"></div>
<div class="t" style="left:463px;top:317px;font-size:11px;color:#222;letter-spacing:0.4px">Cancel</div>
<div class="a" style="left:1082px;top:474px;width:264px;height:129px;background:#2e2e2e;border:1px solid #1a1a1a"></div>
<div class="a" style="left:1083px;top:475px;width:263px;height:22px;background:linear-gradient(#5e6169 0,#50545d 35%,#3b3d43 37%,#46484e 100%)"></div>
<svg style="left:1085px;top:477px" width="15" height="18" viewBox="0 0 15 18"><path d="M1.5 16.5 L6.8 2 L12 14.5" fill="none" stroke="#2a8294" stroke-width="1.9"/><path d="M3.2 11.5 Q6 9.5 9.5 11" fill="none" stroke="#2a8294" stroke-width="1.3"/><circle cx="12.3" cy="15.3" r="1.7" fill="#2a8294"/></svg>
<div class="t" style="left:1101px;top:481px;font-size:11px;font-weight:bold;color:#f4f4f4">Run Time Window</div>
<div class="a" style="left:1292px;top:479px;width:14px;height:14px;background:linear-gradient(#a8a8a8,#5c5c5c 55%,#484848);border:1px solid #222;border-radius:2px;box-shadow:inset 0 1px 0 #c8c8c8"></div>
<div class="a" style="left:1309px;top:479px;width:14px;height:14px;background:linear-gradient(#a8a8a8,#5c5c5c 55%,#484848);border:1px solid #222;border-radius:2px;box-shadow:inset 0 1px 0 #c8c8c8"></div>
<div class="a" style="left:1326px;top:479px;width:14px;height:14px;background:linear-gradient(#a8a8a8,#5c5c5c 55%,#484848);border:1px solid #222;border-radius:2px;box-shadow:inset 0 1px 0 #c8c8c8"></div>
<div class="a" style="left:1296px;top:487px;width:6px;height:2px;background:#fff"></div>
<div class="a" style="left:1312px;top:482px;width:8px;height:8px;border:1px solid #fff;border-top-width:2px"></div>
<svg style="left:1329px;top:482px" width="8" height="8"><path d="M0.5 0.5 L7.5 7.5 M7.5 0.5 L0.5 7.5" stroke="#fff" stroke-width="2"/></svg>
<div class="a" style="left:1097px;top:507px;width:235px;height:75px;background:#eeeeee"></div>
<div class="t" style="left:1106px;top:513px;font-size:11px;font-weight:bold;color:#111;letter-spacing:-0.25px">Change_outlook Password</div>
<div class="a" style="left:1103px;top:527px;width:182px;height:11px;background:#eaeaea;border:1px solid #b0b0b0;border-right-color:#fafafa;border-bottom-color:#fafafa"></div>
<div class="a" style="left:1104px;top:528px;width:28px;height:9px;background:#2a8af0"></div>
<svg style="left:1295px;top:527px" width="12" height="12" viewBox="0 0 12 12"><circle cx="6" cy="6" r="6" fill="#1a4cc0"/><rect x="3.5" y="3" width="1.8" height="6" fill="#fff"/><rect x="6.7" y="3" width="1.8" height="6" fill="#fff"/></svg>
<svg style="left:1312px;top:527px" width="12" height="12" viewBox="0 0 12 12"><circle cx="6" cy="6" r="6" fill="#1a4cc0"/><path d="M3.5 3.5 L8.5 8.5 M8.5 3.5 L3.5 8.5" stroke="#fff" stroke-width="1.8"/></svg>
<div class="t" style="left:1106px;top:547px;font-size:11px;font-weight:bold;color:#111">Line :</div>
<div class="t" style="left:1139px;top:548px;font-size:11px;color:#111">3 of 20</div>
<div class="t" style="left:1106px;top:565px;font-size:11px;font-weight:bold;color:#111">Action :</div>
<div class="t" style="left:1151px;top:565px;font-size:11px;color:#111">Prompt</div>
<div class="t" style="left:1090px;top:598px;font-size:11px;color:#f0f0f0">Use 'Pause' key to pause, Keep 'Esc' key pressed</div>
</body></html>
